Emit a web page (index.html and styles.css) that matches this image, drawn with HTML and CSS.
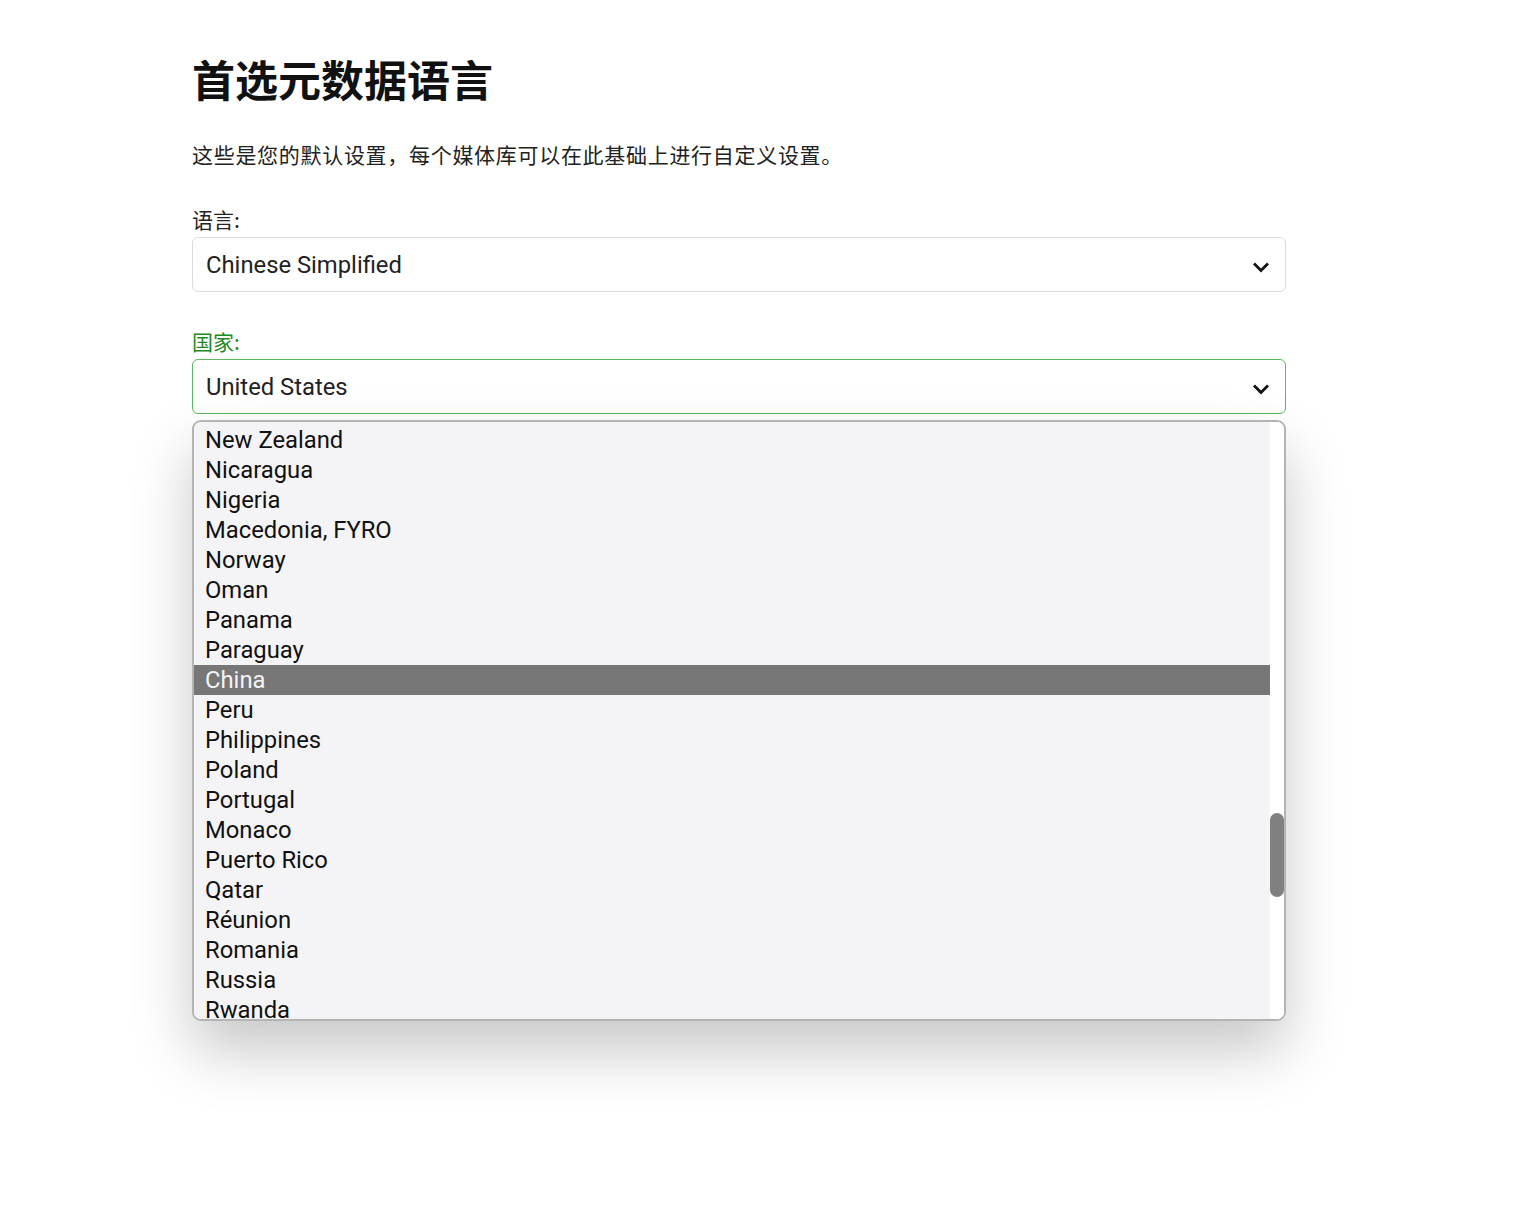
FILE: index.html
```html
<!DOCTYPE html>
<html lang="zh-CN">
<head>
<meta charset="utf-8">
<title>首选元数据语言</title>
<link rel="stylesheet" href="styles.css">
</head>
<body>
<div class="page">
  <h1 class="title">首选元数据语言</h1>
  <p class="desc">这些是您的默认设置，每个媒体库可以在此基础上进行自定义设置。</p>

  <div class="field">
    <div class="label">语言:</div>
    <div class="select">
      <span class="value">Chinese Simplified</span>
      <svg class="chev" width="18" height="12" viewBox="0 0 18 12"><path d="M2 2.5 L9 9.5 L16 2.5" fill="none" stroke="#111" stroke-width="2.8"/></svg>
    </div>
  </div>

  <div class="field field-country">
    <div class="label label-active">国家:</div>
    <div class="select select-active">
      <span class="value">United States</span>
      <svg class="chev" width="18" height="12" viewBox="0 0 18 12"><path d="M2 2.5 L9 9.5 L16 2.5" fill="none" stroke="#111" stroke-width="2.8"/></svg>
    </div>
    <div class="country-list">
      <div class="options">
        <div class="opt">New Zealand</div>
        <div class="opt">Nicaragua</div>
        <div class="opt">Nigeria</div>
        <div class="opt">Macedonia, FYRO</div>
        <div class="opt">Norway</div>
        <div class="opt">Oman</div>
        <div class="opt">Panama</div>
        <div class="opt">Paraguay</div>
        <div class="opt opt-selected">China</div>
        <div class="opt">Peru</div>
        <div class="opt">Philippines</div>
        <div class="opt">Poland</div>
        <div class="opt">Portugal</div>
        <div class="opt">Monaco</div>
        <div class="opt">Puerto Rico</div>
        <div class="opt">Qatar</div>
        <div class="opt">Réunion</div>
        <div class="opt">Romania</div>
        <div class="opt">Russia</div>
        <div class="opt">Rwanda</div>
      </div>
      <div class="track"><div class="thumb"></div></div>
    </div>
  </div>
</div>
</body>
</html>
```

FILE: styles.css
```css
html, body {
  margin: 0;
  padding: 0;
  background: #fff;
}
body {
  font-family: Roboto, "Noto Sans CJK SC", sans-serif;
  color: #222;
  min-height: 1212px;
}
.page {
  width: 1094px;
  padding: 52px 0 0 192px;
}
.title {
  margin: 0;
  font-family: "Noto Sans CJK SC", sans-serif;
  font-size: 43px;
  line-height: 52px;
  font-weight: 700;
  color: #111;
}
.desc {
  margin: 35px 0 0 0;
  font-family: "Noto Sans CJK SC", sans-serif;
  font-size: 21px;
  line-height: 30px;
  color: #222;
  letter-spacing: 0.7px;
}
.field {
  margin-top: 36px;
}
.field-country {
  margin-top: 35px;
}
.label {
  font-family: "Noto Sans CJK SC", sans-serif;
  font-size: 21px;
  line-height: 28px;
  color: #222;
  margin-bottom: 4px;
}
.label-active {
  color: #1f8a1f;
}
.select {
  box-sizing: border-box;
  height: 55px;
  border: 1px solid #dcdcdc;
  border-radius: 6px;
  display: flex;
  align-items: center;
  justify-content: space-between;
  padding: 0 15px 0 13px;
  background: #fff;
}
.select-active {
  border-color: #5cb85c;
}
.value {
  font-size: 23.8px;
  color: #222;
}
.chev {
  display: block;
  margin-top: 4px;
}
.country-list {
  margin-top: 6px;
  width: 1094px;
  height: 601px;
  box-sizing: border-box;
  border: 2px solid #b4b4b4;
  border-radius: 9px;
  background: #fff;
  overflow: hidden;
  display: flex;
  box-shadow: 0 30px 60px rgba(0, 0, 0, 0.22);
}
.options {
  flex: 1;
  background: #f4f4f6;
  padding-top: 3px;
  overflow: hidden;
}
.opt {
  height: 30px;
  line-height: 30px;
  padding-left: 11px;
  font-size: 23.8px;
  color: #111;
  white-space: nowrap;
}
.opt-selected {
  background: #777;
  color: #f4f4f4;
}
.track {
  width: 14px;
  background: #fff;
  display: flex;
  flex-direction: column;
  padding-top: 391px;
}
.thumb {
  width: 14px;
  height: 84px;
  border-radius: 7px;
  background: #808080;
}
```
